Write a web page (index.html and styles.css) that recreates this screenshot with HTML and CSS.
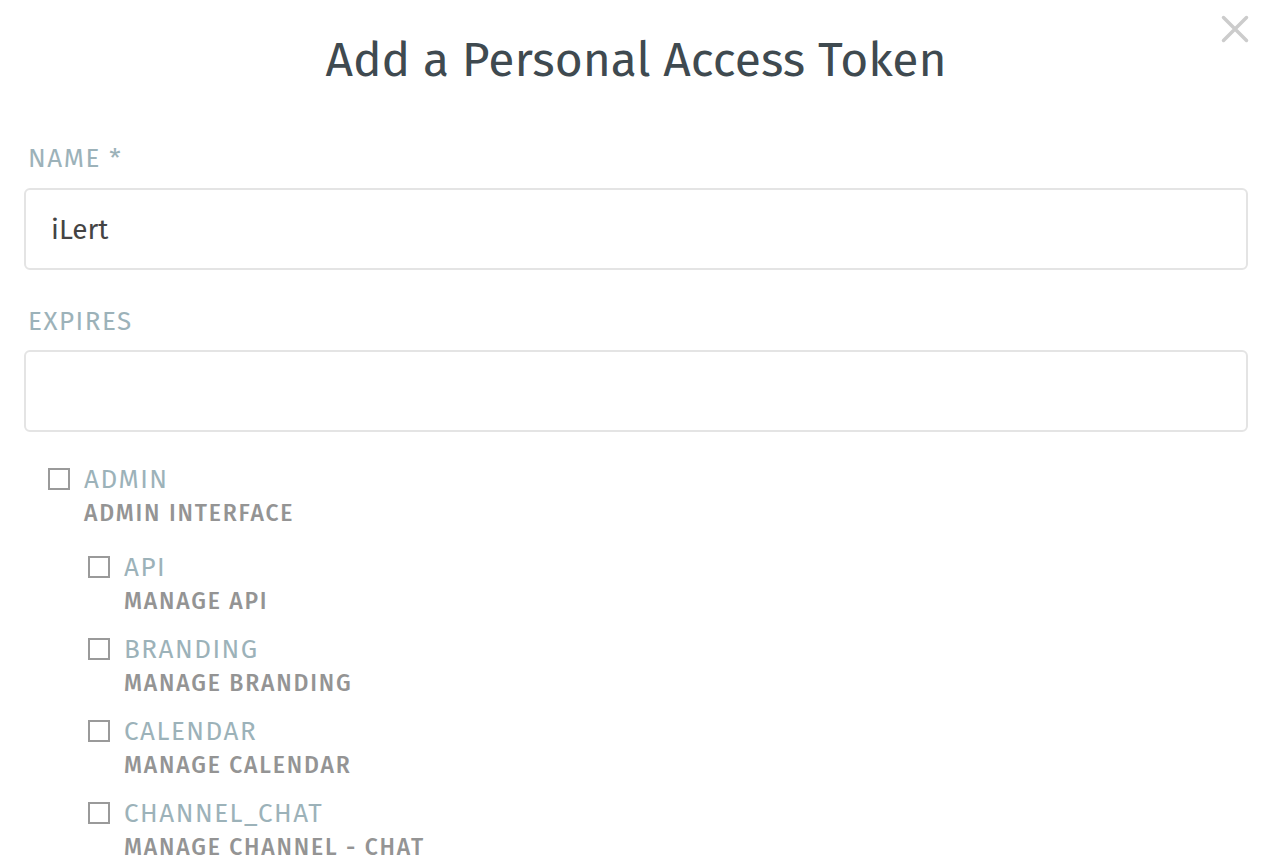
FILE: index.html
```html
<!DOCTYPE html>
<html lang="en">
<head>
<meta charset="utf-8">
<title>Add a Personal Access Token</title>
<link rel="stylesheet" href="styles.css">
</head>
<body>
<div class="modal">
  <button class="close" aria-label="Close">
    <svg width="28" height="28" viewBox="0 0 28 28"><path d="M2.5 2.5 L25.5 25.5 M25.5 2.5 L2.5 25.5" stroke="#cccccc" stroke-width="3.5" stroke-linecap="round" fill="none"/></svg>
  </button>
  <h1 class="title">Add a Personal Access Token</h1>
  <div class="field">
    <label class="field-label">NAME *</label>
    <div class="input">iLert</div>
  </div>
  <div class="field">
    <label class="field-label">EXPIRES</label>
    <div class="input"></div>
  </div>
  <ul class="scopes">
    <li class="scope">
      <div class="scope-head"><span class="box"></span><span class="scope-name">ADMIN</span></div>
      <div class="scope-desc">ADMIN INTERFACE</div>
      <ul class="scopes children">
        <li class="scope">
          <div class="scope-head"><span class="box"></span><span class="scope-name">API</span></div>
          <div class="scope-desc">MANAGE API</div>
        </li>
        <li class="scope">
          <div class="scope-head"><span class="box"></span><span class="scope-name">BRANDING</span></div>
          <div class="scope-desc">MANAGE BRANDING</div>
        </li>
        <li class="scope">
          <div class="scope-head"><span class="box"></span><span class="scope-name">CALENDAR</span></div>
          <div class="scope-desc">MANAGE CALENDAR</div>
        </li>
        <li class="scope">
          <div class="scope-head"><span class="box"></span><span class="scope-name">CHANNEL_CHAT</span></div>
          <div class="scope-desc">MANAGE CHANNEL - CHAT</div>
        </li>
      </ul>
    </li>
  </ul>
</div>
</body>
</html>
```
FILE: styles.css
```css
html, body {
  margin: 0;
  padding: 0;
  background: #ffffff;
  height: 100%;
  overflow: hidden;
}
body {
  font-family: "Fira Sans", "Roboto", "Noto Sans", sans-serif;
}
.modal {
  position: relative;
  padding: 24px 40px 0 24px;
}
.close {
  position: absolute;
  top: 15px;
  right: 39px;
  width: 28px;
  height: 28px;
  padding: 0;
  border: 0;
  background: transparent;
  display: flex;
}
.title {
  margin: 0;
  font-size: 48px;
  line-height: 72px;
  font-weight: 400;
  color: #3f4a50;
  text-align: center;
}
.field {
  display: flex;
  flex-direction: column;
}
.field-label {
  font-size: 26px;
  line-height: 32px;
  letter-spacing: 1.5px;
  color: #9cb2b9;
  padding-left: 4px;
  margin-top: 47px;
  margin-bottom: 13px;
}
.field + .field .field-label {
  margin-top: 36px;
  margin-bottom: 12px;
}
.input {
  box-sizing: border-box;
  height: 82px;
  border: 2px solid #e4e4e4;
  border-radius: 6px;
  padding: 0 25px;
  display: flex;
  align-items: center;
  font-size: 28px;
  color: #444;
}
.scopes {
  list-style: none;
  margin: 31px 0 0 24px;
  padding: 0;
}
.scopes.children {
  margin: 22px 0 0 40px;
}
.scope + .scope {
  margin-top: 16px;
}
.scope-head {
  display: flex;
  align-items: center;
  height: 32px;
}
.box {
  box-sizing: border-box;
  width: 22px;
  height: 22px;
  border: 2px solid #9a9a9a;
  margin-right: 14px;
  flex: none;
}
.scope-name {
  font-size: 26px;
  line-height: 30px;
  padding-top: 2px;
  letter-spacing: 1.5px;
  color: #9cb2b9;
}
.scope-desc {
  margin-top: 2px;
  padding-left: 36px;
  font-size: 23px;
  line-height: 32px;
  letter-spacing: 1.8px;
  font-weight: 500;
  color: #949494;
}
```
